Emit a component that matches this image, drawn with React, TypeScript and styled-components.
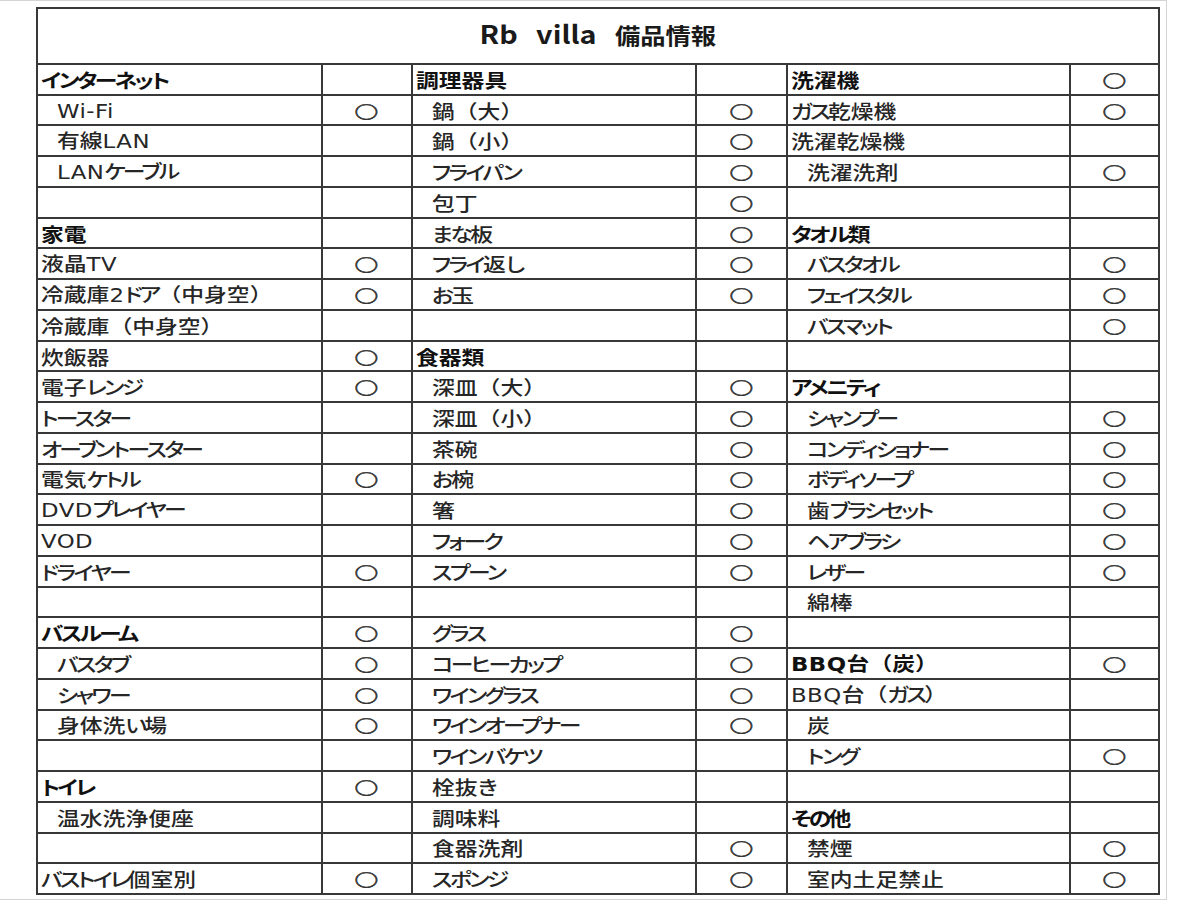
import React from 'react';
import styled, { createGlobalStyle } from 'styled-components';

const GlobalStyle = createGlobalStyle`
  html, body { margin: 0; padding: 0; background: #ffffff; }
  body { font-family: "Noto Sans CJK JP", "Noto Sans", sans-serif; }
`;

const Page = styled.div`
  width: 1167px;
  height: 900px;
  box-sizing: border-box;
  border-top: 1px solid #d4d4d4;
  border-right: 1px solid #d4d4d4;
  border-bottom: 1px solid #d4d4d4;
  padding: 6px 0 0 36px;
`;

const Sheet = styled.div`
  display: grid;
  grid-template-columns: 283px 88px 282px 89px 281px 87px;
  grid-template-rows: 54px repeat(27, 1fr);
  gap: 2px;
  padding: 2px;
  width: 1124px;
  height: 888px;
  box-sizing: border-box;
  background: #383838;
`;

const TitleCell = styled.div`
  grid-column: 1 / -1;
  background: #fff;
  display: flex;
  align-items: center;
  justify-content: center;
  padding-bottom: 6px;
`;

const TitleText = styled.div`
  display: flex;
  align-items: baseline;
  gap: 16px;
  color: #1a1a1a;
  font-weight: 700;
  transform: scaleX(1.15);
`;

const TitleLatin = styled.span`
  font-size: 25px;
  font-weight: 700;
`;

const TitleCJK = styled.span`
  font-size: 22px;
  font-weight: 700;
`;

const ItemCell = styled.div<{ $indent?: boolean; $bold?: boolean }>`
  background: #fff;
  display: flex;
  align-items: center;
  padding-left: ${(p) => (p.$indent ? 19 : 3)}px;
  font-size: 19px;
  font-weight: ${(p) => (p.$bold ? 700 : 500)};
  color: ${(p) => (p.$bold ? '#111' : '#262626')};
  white-space: nowrap;
  overflow: hidden;
  line-height: 1;
`;

const ItemText = styled.span`
  display: inline-block;
  transform: scaleX(1.2);
  transform-origin: left center;
`;

const Latin = styled.span`
  font-family: "DejaVu Sans", "Noto Sans CJK JP", sans-serif;
  font-size: 19px;
  letter-spacing: 0.4px;
`;

const Kana = styled.span`
  font-feature-settings: "palt";
  letter-spacing: -2.2px;
`;

const MarkCell = styled.div`
  background: #fff;
  display: flex;
  align-items: center;
  justify-content: center;
`;

const Mark = styled.span`
  display: inline-block;
  font-family: "Noto Sans CJK JP", sans-serif;
  font-size: 19px;
  font-weight: 700;
  line-height: 1;
  color: #333;
  -webkit-text-stroke: 0.6px #333;
  transform: scale(1.25, 0.86);
`;

type Row = [string, boolean, string, boolean, string, boolean];

// "*" = bold heading, ">" = indented item
const rows: Row[] = [
  ['*インターネット', false, '*調理器具', false, '*洗濯機', true],
  ['>Wi-Fi', true, '>鍋（大）', true, 'ガス乾燥機', true],
  ['>有線LAN', false, '>鍋（小）', true, '洗濯乾燥機', false],
  ['>LANケーブル', false, '>フライパン', true, '>洗濯洗剤', true],
  ['', false, '>包丁', true, '', false],
  ['*家電', false, '>まな板', true, '*タオル類', false],
  ['液晶TV', true, '>フライ返し', true, '>バスタオル', true],
  ['冷蔵庫2ドア（中身空）', true, '>お玉', true, '>フェイスタル', true],
  ['冷蔵庫（中身空）', false, '', false, '>バスマット', true],
  ['炊飯器', true, '*食器類', false, '', false],
  ['電子レンジ', true, '>深皿（大）', true, '*アメニティ', false],
  ['トースター', false, '>深皿（小）', true, '>シャンプー', true],
  ['オーブントースター', false, '>茶碗', true, '>コンディショナー', true],
  ['電気ケトル', true, '>お椀', true, '>ボディソープ', true],
  ['DVDプレイヤー', false, '>箸', true, '>歯ブラシセット', true],
  ['VOD', false, '>フォーク', true, '>ヘアブラシ', true],
  ['ドライヤー', true, '>スプーン', true, '>レザー', true],
  ['', false, '', false, '>綿棒', false],
  ['*バスルーム', true, '>グラス', true, '', false],
  ['>バスタブ', true, '>コーヒーカップ', true, '*BBQ台（炭）', true],
  ['>シャワー', true, '>ワイングラス', true, 'BBQ台（ガス）', false],
  ['>身体洗い場', true, '>ワインオープナー', true, '>炭', false],
  ['', false, '>ワインバケツ', false, '>トング', true],
  ['*トイレ', true, '>栓抜き', false, '', false],
  ['>温水洗浄便座', false, '>調味料', false, '*その他', false],
  ['', false, '>食器洗剤', true, '>禁煙', true],
  ['バストイレ個室別', true, '>スポンジ', true, '>室内土足禁止', true],
];

type RunKind = 'latin' | 'kana' | 'other';

function kindOf(ch: string): RunKind {
  if (/[A-Za-z0-9\-]/.test(ch)) return 'latin';
  if (/[\u3040-\u30ff]/.test(ch)) return 'kana';
  return 'other';
}

function renderText(text: string) {
  const runs: { kind: RunKind; text: string }[] = [];
  for (const ch of Array.from(text)) {
    const k = kindOf(ch);
    const last = runs[runs.length - 1];
    if (last && last.kind === k) last.text += ch;
    else runs.push({ kind: k, text: ch });
  }
  return runs.map((run, i) => {
    if (run.kind === 'latin') return <Latin key={i}>{run.text}</Latin>;
    if (run.kind === 'kana') return <Kana key={i}>{run.text}</Kana>;
    return <React.Fragment key={i}>{run.text}</React.Fragment>;
  });
}

function Item({ spec }: { spec: string }) {
  const bold = spec.startsWith('*');
  const indent = spec.startsWith('>');
  const text = bold || indent ? spec.slice(1) : spec;
  return (
    <ItemCell $bold={bold} $indent={indent}>
      {text ? <ItemText>{renderText(text)}</ItemText> : null}
    </ItemCell>
  );
}

function Check({ on }: { on: boolean }) {
  return <MarkCell>{on ? <Mark>○</Mark> : null}</MarkCell>;
}

export default function App() {
  return (
    <>
      <GlobalStyle />
      <Page>
        <Sheet>
          <TitleCell>
            <TitleText>
              <TitleLatin>Rb</TitleLatin>
              <TitleLatin>villa</TitleLatin>
              <TitleCJK>備品情報</TitleCJK>
            </TitleText>
          </TitleCell>
          {rows.map((r, i) => (
            <React.Fragment key={i}>
              <Item spec={r[0]} />
              <Check on={r[1]} />
              <Item spec={r[2]} />
              <Check on={r[3]} />
              <Item spec={r[4]} />
              <Check on={r[5]} />
            </React.Fragment>
          ))}
        </Sheet>
      </Page>
    </>
  );
}
